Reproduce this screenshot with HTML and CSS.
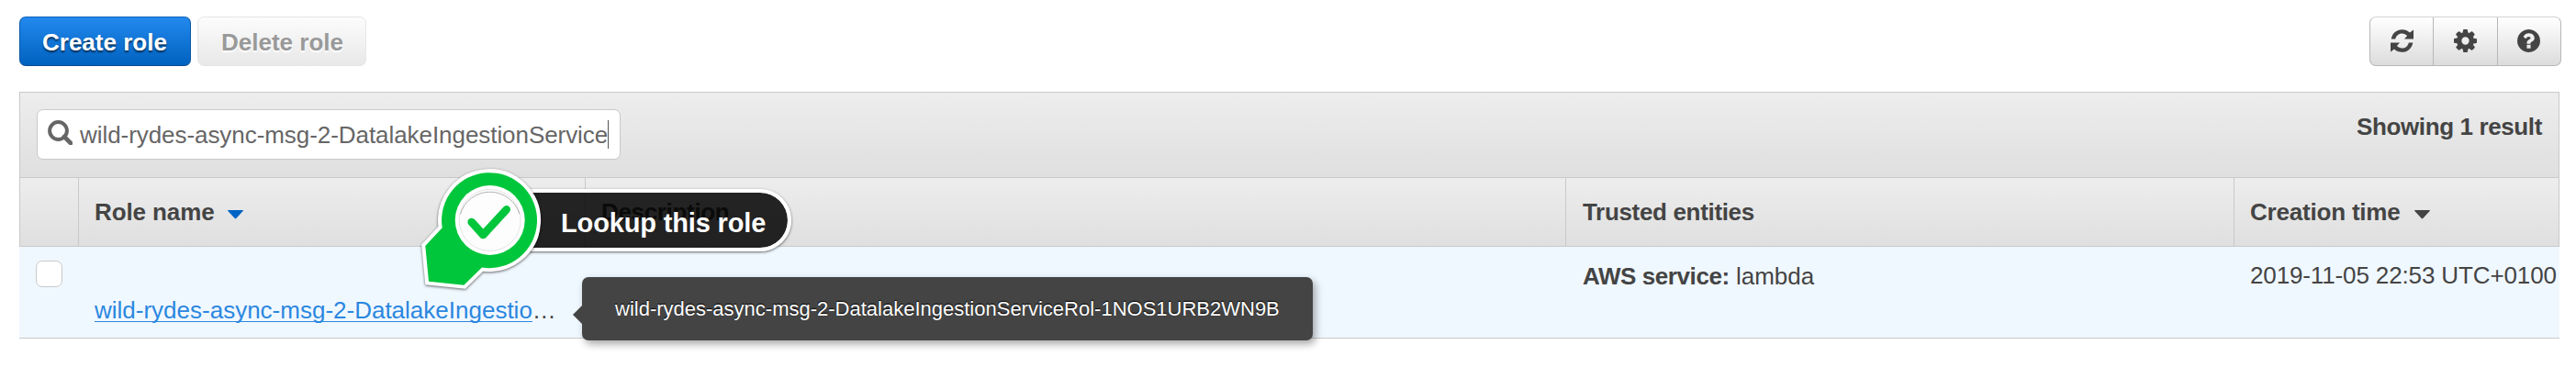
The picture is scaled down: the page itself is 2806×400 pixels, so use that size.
FILE: index.html
```html
<!DOCTYPE html>
<html lang="en">
<head>
<meta charset="utf-8">
<title>Roles</title>
<link rel="stylesheet" href="styles.css">
</head>
<body>
<div class="page">
  <header class="toolbar">
    <div class="actions">
      <button class="btn btn-primary"><span class="t-create">Create role</span></button>
      <button class="btn btn-disabled" disabled><span class="t-delete">Delete role</span></button>
    </div>
    <div class="icon-group">
      <button class="icon-btn" aria-label="Refresh"><svg class="icon" viewBox="0 0 25 25"><path d="M.7 10.6C1.8 4.3 6.5.2 12.5.2c3.3 0 6.3 1.200 8.500 3.300L25 .5v10.100h-10l3.100-3.700C16.600 5.300 14.700 4.400 12.500 4.400c-3.700 0-6.300 2.300-7.300 6.200zM24.300 14.400C23.200 20.700 18.500 24.800 12.500 24.800c-3.300 0-6.300-1.200-8.500-3.300L0 24.500V14.400h10l-3.100 3.700c1.500 1.600 3.400 2.500 5.600 2.500 3.700 0 6.300-2.300 7.300-6.200z"/></svg></button>
      <button class="icon-btn" aria-label="Settings"><svg class="icon" viewBox="128 128 1536 1536"><path d="M1152 896q0-106-75-181t-181-75-181 75-75 181 75 181 181 75 181-75 75-181zm512-109v222q0 12-8 23t-20 13l-185 28q-19 54-39 91 35 50 107 138 10 12 10 25t-9 23q-27 37-99 108t-94 71q-12 0-26-9l-138-108q-44 23-91 38-16 136-29 186-7 28-36 28h-222q-14 0-24.500-8.500t-11.500-21.500l-28-184q-49-16-90-37l-141 107q-10 9-25 9-14 0-25-11-126-114-165-168-7-10-7-23 0-12 8-23 15-21 51-66.500t54-70.500q-27-50-41-99l-183-27q-13-2-21-12.500t-8-23.500v-222q0-12 8-23t19-13l186-28q14-46 39-92-40-57-107-138-10-12-10-24 0-10 9-23 26-36 98.500-107.500t94.500-71.500q13 0 26 10l138 107q44-23 91-38 16-136 29-186 7-28 36-28h222q14 0 24.500 8.500t11.500 21.500l28 184q49 16 90 37l142-107q9-9 24-9 13 0 25 10 129 119 165 170 7 8 7 22 0 12-8 23-15 21-51 66.500t-54 70.500q26 50 41 98l183 28q13 2 21 12.500t8 23.500z"/></svg></button>
      <button class="icon-btn" aria-label="Help"><svg class="icon" viewBox="128 128 1536 1536"><path d="M1024 1376v-192q0-14-9-23t-23-9h-192q-14 0-23 9t-9 23v192q0 14 9 23t23 9h192q14 0 23-9t9-23zm256-672q0-88-55.500-163t-138.500-116-170-41q-243 0-371 213-15 24 8 42l132 100q7 6 19 6 16 0 25-12 53-68 86-92 34-24 86-24 48 0 85.500 26t37.500 59q0 38-20 61t-68 45q-63 28-115.500 86.500t-52.500 125.500v36q0 14 9 23t23 9h192q14 0 23-9t9-23q0-19 21.500-49.500t54.500-49.500q32-18 49-28.500t46-35 44.500-48 28-60.500 12.500-81zm384 192q0 209-103 385.500t-279.500 279.500-385.500 103-385.500-103-279.500-279.500-103-385.500 103-385.500 279.500-279.500 385.500-103 385.500 103 279.500 279.500 103 385.500z"/></svg></button>
    </div>
  </header>

  <main class="panel">
    <div class="filter-bar">
      <div class="search">
        <svg class="search-icon" viewBox="0 0 27 27"><circle cx="11.500" cy="11.500" r="9.400" fill="none" stroke="#666" stroke-width="4"/><path d="M18 18l7 7" stroke="#666" stroke-width="4.600" stroke-linecap="round"/></svg>
        <span class="t-query">wild-rydes-async-msg-2-DatalakeIngestionService</span><span class="caret"></span>
      </div>
      <div class="count"><span class="t-count">Showing 1 result</span></div>
    </div>

    <div class="row head">
      <div class="cell"></div>
      <div class="cell"><span class="t-role">Role name</span><svg class="sort sort-active" viewBox="0 0 17 10"><path d="M.6 0h15.800c.6 0 .8.6.3 1L9.500 8.700c-.6.700-1.400.7-2 0L.3 1C-.2.6 0 0 .6 0z"/></svg></div>
      <div class="cell"><span class="t-desc">Description</span></div>
      <div class="cell"><span class="t-trusted">Trusted entities</span></div>
      <div class="cell"><span class="t-created">Creation time</span><svg class="sort" viewBox="0 0 17 10"><path d="M.6 0h15.800c.6 0 .8.6.3 1L9.500 8.700c-.6.700-1.400.7-2 0L.3 1C-.2.6 0 0 .6 0z"/></svg></div>
    </div>

    <div class="row item">
      <div class="cell"><span class="checkbox"></span></div>
      <div class="cell link-cell"><a class="link">wild-rydes-async-msg-2-DatalakeIngestio</a><span>…</span></div>
      <div class="cell"></div>
      <div class="cell service-cell"><span><b class="t-service">AWS service:</b> lambda</span></div>
      <div class="cell"><span class="t-date">2019-11-05 22:53 UTC+0100</span></div>
    </div>
  </main>

  <div class="tooltip"><span>wild-rydes-async-msg-2-DatalakeIngestionServiceRol-1NOS1URB2WN9B</span></div>

  <div class="callout">
    <div class="callout-label"><span class="t-callout">Lookup this role</span></div>
    <svg class="callout-pin" viewBox="450 176 150 150">
      <g class="pin-shape">
        <path class="pin-outline" d="M481.700 248.300L463.300 268 467 306.700 505.300 310.700 525 291.500A52 52 0 1 0 481.700 248.300z"/>
        <path class="pin-body" d="M481.700 248.300L463.300 268 467 306.700 505.300 310.700 525 291.500A52 52 0 1 0 481.700 248.300z"/>
      </g>
      <circle cx="533.700" cy="240" r="38" fill="#fff"/>
      <circle cx="533.700" cy="240" r="33.500" fill="#fdfdfd" stroke="#e4e4e4" stroke-width="1"/>
      <path d="M501.500 233.500a33.500 33.500 0 0 1 64.400 0" fill="none" stroke="#b4b4b4" stroke-width="1"/>
      <path d="M513.700 242L526.300 256 551.700 228.300" fill="none" stroke="#00c63c" stroke-width="8.600" stroke-linecap="round" stroke-linejoin="round"/>
    </svg>
  </div>
</div>
</body>
</html>
```
FILE: styles.css
```css
* { box-sizing: border-box; }
body { margin: 0; background: #fff; }
.page {
  position: relative;
  width: 2806px;
  height: 400px;
  padding: 18px 16px 0 21px;
  overflow: hidden;
  color: #444;
  font: 26px/30px "Liberation Sans", Arial, sans-serif;
}
span, a { white-space: nowrap; }
.toolbar { display: flex; justify-content: space-between; }
.actions { display: flex; gap: 7px; }
.btn {
  height: 54px;
  padding: 2px 0 0 24px;
  border: 1px solid;
  border-radius: 7px;
  font: bold 26px/30px "Liberation Sans", Arial, sans-serif;
  text-align: left;
}
.btn-primary {
  width: 187px;
  color: #fff;
  border-color: #1166bb #0b57a4 #0a4a8c;
  background: linear-gradient(#2389ee, #0062bf);
  text-shadow: 0 2px 2px rgba(0,0,0,.6);
}
.btn-disabled {
  width: 184px;
  padding-left: 25px;
  color: #999;
  border-color: #e6e6e6;
  background: linear-gradient(#fcfcfc, #e8e8e8);
  text-shadow: 0 2px 2px #fff;
}
.icon-group {
  display: flex;
  width: 209px;
  height: 54px;
  border: 1px solid #b7b7b7;
  border-top-color: #d4d4d4;
  border-radius: 7px;
  background: linear-gradient(#fff, #dcdcdc);
}
.icon-btn {
  flex: 1;
  display: flex;
  align-items: center;
  justify-content: center;
  padding: 0 0 1px;
  border: 0;
  background: none;
}
.icon-btn + .icon-btn { border-left: 1px solid #b7b7b7; }
.icon { width: 25px; height: 25px; fill: #444; }

.panel { width: 2767px; margin-top: 28px; }
.filter-bar {
  display: flex;
  justify-content: space-between;
  height: 93px;
  padding: 18px 18px 0;
  border: 1px solid #c9c9c9;
  border-bottom: 0;
  background: linear-gradient(#ededed, #dfdfdf);
}
.search {
  display: flex;
  align-items: center;
  width: 636px;
  height: 55px;
  padding-left: 11px;
  border: 1px solid #c9c9c9;
  border-radius: 7px;
  background: #fff;
  color: #666;
}
.search-icon { width: 27px; height: 27px; margin: 0 8px 4px 0; }
.t-query { letter-spacing: -.06px; }
.caret { width: 1px; height: 31px; background: #555; }
.count { padding-top: 4px; font-weight: bold; letter-spacing: -.38px; }

.row { display: grid; grid-template-columns: 63px 552px 1068px 728px 354px; }
.head {
  height: 76px;
  border: 1px solid #c9c9c9;
  background: linear-gradient(#ededed, #dfdfdf);
  font-weight: bold;
}
.head .cell { display: flex; padding: 22px 0 0 17px; }
.head .cell + .cell { border-left: 1px solid #c9c9c9; }
.t-role { letter-spacing: -.1px; }
.t-desc, .t-trusted { letter-spacing: -.33px; }
.head .t-trusted { margin-left: 1px; }
.t-created { letter-spacing: -.2px; }
.sort { width: 17px; height: 10px; margin: 13px 0 0 15px; fill: #444; }
.sort-active { margin-left: 14px; fill: #0064c4; }
.item {
  height: 100px;
  border-bottom: 1px solid #c9c9c9;
  background: #f0f8ff;
}
.item .cell { padding: 16px 0 0 19px; }
.item .link-cell { padding-top: 54px; }
.item .service-cell { padding: 17px 0 0 20px; }
.t-service { letter-spacing: -.42px; }
.t-date { letter-spacing: -.13px; }
.checkbox {
  display: block;
  width: 29px;
  height: 29px;
  margin: -1px;
  border: 1px solid #c9c9c9;
  border-radius: 7px;
  background: #fff;
}
.link { display: inline-block; height: 28px; line-height: 30px; color: #2b87df; border-bottom: 1px solid #2b87df; }

.tooltip {
  position: absolute;
  left: 634px;
  top: 302px;
  width: 796px;
  height: 69px;
  padding: 21px 0 0 36px;
  border-radius: 7px;
  background: #444;
  color: #fff;
  font-size: 22px;
  line-height: 28px;
  text-shadow: 0 -1px 1px #000;
  box-shadow: 3px 4px 8px rgba(0,0,0,.35);
}
.tooltip::before {
  content: "";
  position: absolute;
  left: -10px;
  top: 31px;
  border: 10px solid transparent;
  border-left: 0;
  border-right-color: #444;
}
.callout-label {
  position: absolute;
  left: 550px;
  top: 206px;
  width: 312px;
  height: 68px;
  padding: 17px 0 0 57px;
  border: 4px solid #fff;
  border-radius: 0 34px 34px 0;
  background: rgba(0,0,0,.85);
  background-clip: padding-box;
  box-shadow: 0 1px 3px rgba(0,0,0,.6);
  color: #fff;
  font-size: 29px;
  font-weight: bold;
  line-height: 32px;
}
.t-callout { letter-spacing: -.15px; }
.callout-pin { position: absolute; left: 450px; top: 176px; width: 150px; height: 150px; }
.pin-shape { filter: drop-shadow(0 1px 1.5px rgba(0,0,0,.6)); }
.pin-outline { fill: #fff; stroke: #fff; stroke-width: 8px; }
.pin-body { fill: #00c63c; }
```
